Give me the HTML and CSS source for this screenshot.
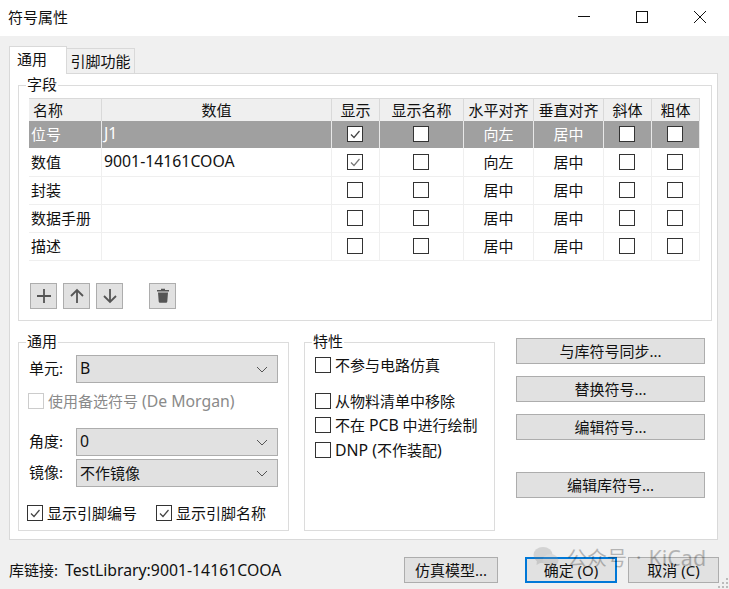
FILE: index.html
```html
<!DOCTYPE html>
<html lang="zh">
<head>
<meta charset="utf-8">
<title>符号属性</title>
<link rel="stylesheet" href="styles.css">
</head>
<body>
<div class="window">
  <header class="titlebar">
    <span class="title">符号属性</span>
    <div class="controls">
      <svg class="ctl" width="12" height="12" viewBox="0 0 12 12"><path d="M0 5.5H12" stroke="#111" fill="none"/></svg>
      <svg class="ctl" width="12" height="12" viewBox="0 0 12 12"><rect x=".5" y=".5" width="11" height="11" stroke="#111" fill="none"/></svg>
      <svg class="ctl" width="12" height="12" viewBox="0 0 12 12"><path d="M0 0L12 12M12 0L0 12" stroke="#111" fill="none"/></svg>
    </div>
  </header>

  <main class="content">
    <div class="tabs">
      <div class="tab active">通用</div>
      <div class="tab">引脚功能</div>
    </div>
    <div class="panel">
      <fieldset class="group fields">
        <legend>字段</legend>
        <div class="grid">
          <div class="c h left">名称</div><div class="c h">数值</div><div class="c h">显示</div><div class="c h">显示名称</div><div class="c h">水平对齐</div><div class="c h">垂直对齐</div><div class="c h">斜体</div><div class="c h">粗体</div>

          <div class="c sel left"><span class="t">位号</span></div><div class="c sel left"><span class="t lat">J1</span></div><div class="c sel"><span class="cb"><svg width="14" height="14" viewBox="0 0 14 14"><path d="M3 7.5L6 10.5L11.5 4" stroke="#444" fill="none" stroke-width="1.2"/></svg></span></div><div class="c sel"><span class="cb"></span></div><div class="c sel"><span class="t">向左</span></div><div class="c sel"><span class="t">居中</span></div><div class="c sel"><span class="cb"></span></div><div class="c sel"><span class="cb"></span></div>

          <div class="c left"><span class="t">数值</span></div><div class="c left"><span class="t lat">9001-14161COOA</span></div><div class="c"><span class="cb"><svg width="14" height="14" viewBox="0 0 14 14"><path d="M3 7.5L6 10.5L11.5 4" stroke="#777" fill="none" stroke-width="1.2"/></svg></span></div><div class="c"><span class="cb"></span></div><div class="c"><span class="t">向左</span></div><div class="c"><span class="t">居中</span></div><div class="c"><span class="cb"></span></div><div class="c"><span class="cb"></span></div>

          <div class="c left"><span class="t">封装</span></div><div class="c left"></div><div class="c"><span class="cb"></span></div><div class="c"><span class="cb"></span></div><div class="c"><span class="t">居中</span></div><div class="c"><span class="t">居中</span></div><div class="c"><span class="cb"></span></div><div class="c"><span class="cb"></span></div>

          <div class="c left"><span class="t">数据手册</span></div><div class="c left"></div><div class="c"><span class="cb"></span></div><div class="c"><span class="cb"></span></div><div class="c"><span class="t">居中</span></div><div class="c"><span class="t">居中</span></div><div class="c"><span class="cb"></span></div><div class="c"><span class="cb"></span></div>

          <div class="c left"><span class="t">描述</span></div><div class="c left"></div><div class="c"><span class="cb"></span></div><div class="c"><span class="cb"></span></div><div class="c"><span class="t">居中</span></div><div class="c"><span class="t">居中</span></div><div class="c"><span class="cb"></span></div><div class="c"><span class="cb"></span></div>
        </div>
        <div class="toolbar">
          <button class="tool"><svg width="18" height="18" viewBox="0 0 18 18"><path d="M9 2V16M2 9H16" stroke="#555" stroke-width="1.8" fill="none"/></svg></button>
          <button class="tool"><svg width="18" height="18" viewBox="0 0 18 18"><path d="M9 16V3M3 9L9 3L15 9" stroke="#555" stroke-width="1.8" fill="none"/></svg></button>
          <button class="tool"><svg width="18" height="18" viewBox="0 0 18 18"><path d="M9 2V15M3 9L9 15L15 9" stroke="#555" stroke-width="1.8" fill="none"/></svg></button>
          <button class="tool trash"><svg width="18" height="18" viewBox="0 0 18 18"><path d="M3 3H7V1.8H11V3H15V4.4H3ZM4 5.4H14L13.3 14.6Q13.2 15.8 12 15.8H6Q4.8 15.8 4.7 14.6Z" fill="#555"/></svg></button>
        </div>
      </fieldset>

      <div class="lower">
        <fieldset class="group general">
          <legend>通用</legend>
          <div class="form-row">
            <span class="lbl">单元:</span>
            <div class="select"><span class="lat">B</span><svg width="12" height="7" viewBox="0 0 12 7"><path d="M1 1L6 6L11 1" stroke="#555" fill="none"/></svg></div>
          </div>
          <label class="check disabled"><span class="cb"></span><span>使用备选符号 <span class="lat">(De Morgan)</span></span></label>
          <div class="form-row angle">
            <span class="lbl">角度:</span>
            <div class="select"><span class="lat">0</span><svg width="12" height="7" viewBox="0 0 12 7"><path d="M1 1L6 6L11 1" stroke="#555" fill="none"/></svg></div>
          </div>
          <div class="form-row mirror">
            <span class="lbl">镜像:</span>
            <div class="select"><span>不作镜像</span><svg width="12" height="7" viewBox="0 0 12 7"><path d="M1 1L6 6L11 1" stroke="#555" fill="none"/></svg></div>
          </div>
          <div class="pins">
            <label class="check"><span class="cb"><svg width="14" height="14" viewBox="0 0 14 14"><path d="M3 7.5L6 10.5L11.5 4" stroke="#444" fill="none" stroke-width="1.2"/></svg></span>显示引脚编号</label>
            <label class="check"><span class="cb"><svg width="14" height="14" viewBox="0 0 14 14"><path d="M3 7.5L6 10.5L11.5 4" stroke="#444" fill="none" stroke-width="1.2"/></svg></span>显示引脚名称</label>
          </div>
        </fieldset>

        <fieldset class="group attrs">
          <legend>特性</legend>
          <label class="check"><span class="cb"></span>不参与电路仿真</label>
          <label class="check gap-a"><span class="cb"></span>从物料清单中移除</label>
          <label class="check gap-b"><span class="cb"></span><span>不在 <span class="lat">PCB</span> 中进行绘制</span></label>
          <label class="check gap-c"><span class="cb"></span><span><span class="lat">DNP (</span>不作装配<span class="lat">)</span></span></label>
        </fieldset>

        <div class="actions">
          <button class="btn">与库符号同步...</button>
          <button class="btn">替换符号...</button>
          <button class="btn">编辑符号...</button>
          <button class="btn last">编辑库符号...</button>
        </div>
      </div>
    </div>
  </main>

  <footer class="footer">
    <span class="link"><span class="link-label">库链接:</span><span class="lat">TestLibrary:9001-14161COOA</span></span>
    <button class="btn sim">仿真模型...</button>
    <button class="btn ok">确定 (O)</button>
    <button class="btn cancel">取消 (C)</button>
  </footer>

  <div class="watermark">
    <svg width="26" height="22" viewBox="0 0 26 22"><ellipse cx="10" cy="8" rx="9.5" ry="8" fill="#7f7f7f"/><path d="M4 13L3.5 18L9 15Z" fill="#7f7f7f"/><ellipse cx="17.5" cy="13.5" rx="8" ry="6.5" fill="#999"/><path d="M21 18L23 21.5L18 19.5Z" fill="#999"/></svg>
    <span class="wm-text">公众号</span>
    <span class="wm-dot">·</span>
    <span class="wm-name">KiCad</span>
  </div>
  <svg class="grip" width="12" height="12" viewBox="0 0 12 12"><path d="M9 1h2v2H9zM5 5h2v2H5zM9 5h2v2H9zM1 9h2v2H1zM5 9h2v2H5zM9 9h2v2H9z" fill="#bbb"/></svg>
</div>
</body>
</html>
```
FILE: styles.css
```css
* { box-sizing: border-box; }
html, body { margin: 0; padding: 0; }
body {
  font-family: "Noto Sans", "Noto Sans CJK SC", sans-serif;
  font-size: 14px;
  color: #111;
}
.lat { font-size: 15.8px; }
.window {
  position: relative;
  width: 729px;
  height: 589px;
  background: #f0f0f0;
  overflow: hidden;
}
.titlebar {
  height: 36px;
  background: #fff;
  display: flex;
  align-items: center;
  justify-content: space-between;
  padding: 0 23px 0 8px;
}
.title { font-size: 15px; line-height: 36px; margin-top: -2px; }
.controls { display: flex; gap: 46px; align-items: center; margin-top: -2px; }
.ctl { display: block; }

.content { padding: 10px 11px 0 9px; }
.tabs { display: flex; align-items: flex-end; height: 28px; }
.tab {
  position: relative;
  height: 25px;
  width: 68px;
  margin-bottom: 1px;
  background: #f0f0f0;
  border: 1px solid #d9d9d9;
  border-left: 0;
  border-bottom: 0;
  font-size: 15px;
  line-height: 24px;
  text-align: center;
}
.tab.active {
  z-index: 1;
  width: 58px;
  height: 28px;
  margin-bottom: 0;
  padding-left: 7px;
  background: #fff;
  border-left: 1px solid #d9d9d9;
  line-height: 25px;
  text-align: left;
}
.panel {
  background: #fff;
  border: 1px solid #d9d9d9;
  height: 467px;
  margin-top: -1px;
  padding: 1px 5px 0 8px;
}

.group {
  margin: 0;
  padding: 0;
  border: 1px solid #dcdcdc;
  min-width: 0;
  background: #fff;
}
.group legend {
  margin-left: -3px;
  padding: 0 1px;
  font-size: 15px;
  line-height: 18px;
  height: 20px;
}
.fields { height: 246px; padding: 3px 10px 0 10px; }

.grid {
  display: grid;
  grid-template-columns: 73px 230px 48px 84px 70px 70px 48px 48px;
  grid-template-rows: 23px 28px 28px 28px 28px 28px;
  width: 671px;
  font-size: 15px;
}
.c {
  display: flex;
  align-items: center;
  justify-content: center;
  padding-bottom: 1px;
  border-right: 1px solid #efefef;
  border-bottom: 1px solid #efefef;
  white-space: nowrap;
  min-width: 0;
}
.t { margin-top: -2px; }
.c.left { justify-content: flex-start; padding-left: 2px; }
.c.h {
  background: #efefef;
  border-top: 1px solid #d9d9d9;
  border-right: 1px solid #d9d9d9;
  border-bottom: 0;
  padding-bottom: 2px;
}
.c.h.left { padding-left: 4px; }
.c.sel {
  background: #a0a0a0;
  color: #fff;
  border-right: 1px solid #e8e8e8;
  border-bottom: 1px solid #fff;
}

.cb {
  flex: none;
  width: 16px;
  height: 16px;
  border: 1px solid #333;
  background: #fff;
  display: inline-flex;
  align-items: center;
  justify-content: center;
}
.c .cb { margin-right: 1px; }
.cb svg { display: block; }

.toolbar { display: flex; gap: 6px; margin-top: 22px; padding-left: 1px; }
.tool {
  width: 27px;
  height: 26px;
  padding: 0;
  background: #e1e1e1;
  border: 1px solid #adadad;
  display: flex;
  align-items: center;
  justify-content: center;
}
.tool.trash { margin-left: 20px; }

.lower { display: flex; align-items: flex-start; margin-top: 11px; }
.general { width: 271px; height: 199px; padding: 3px 10px 0 9px; }
.general legend { margin-left: -2px; }
.attrs { width: 191px; height: 199px; margin-left: 15px; padding: 3px 0 0 10px; }

.form-row { display: flex; align-items: center; height: 28px; }
.form-row.angle { margin-top: 17px; }
.form-row.mirror { margin-top: 3px; }
.lbl { width: 48px; font-size: 15px; flex: none; padding-left: 1px; margin-top: -4px; }
.select {
  flex: 1;
  height: 28px;
  background: #e1e1e1;
  border: 1px solid #adadad;
  display: flex;
  align-items: center;
  justify-content: space-between;
  padding: 0 9px 2px 3px;
  font-size: 15px;
}
.select svg { margin-top: 2px; }

.check {
  display: flex;
  align-items: center;
  gap: 4px;
  font-size: 15px;
  line-height: 20px;
  white-space: nowrap;
}
.check.disabled { color: #8a8a8a; margin-top: 8px; }
.check.disabled .cb { border-color: #ccc; }
.pins { display: flex; gap: 19px; margin-top: 16px; margin-left: -1px; }
.gap-a { margin-top: 16px; }
.gap-b { margin-top: 4px; }
.gap-c { margin-top: 5px; }

.actions { width: 189px; margin-left: 21px; margin-top: 6px; display: flex; flex-direction: column; gap: 12px; }
.btn {
  height: 26px;
  background: #e1e1e1;
  border: 1px solid #adadad;
  font: inherit;
  font-size: 15px;
  color: #111;
  padding: 0 0 2px;
  white-space: nowrap;
}
.btn.last { margin-top: 20px; }

.footer { display: flex; align-items: center; padding: 17px 10px 0 9px; }
.link { font-size: 15px; flex: 1; margin-top: -1px; }
.link-label { margin-right: 7px; }
.sim { width: 94px; }
.ok {
  width: 92px;
  margin-left: 27px;
  border: 2px solid #0078d7;
}
.cancel { width: 91px; margin-left: 11px; }

.watermark {
  position: absolute;
  left: 533px;
  top: 543px;
  display: flex;
  align-items: center;
  color: #000;
  opacity: .25;
  pointer-events: none;
  white-space: nowrap;
}
.wm-text { font-size: 20px; margin-left: 8px; }
.wm-dot { font-size: 20px; margin-left: 9px; }
.wm-name { font-size: 21.5px; margin-left: 7px; }
.grip { position: absolute; right: 0; bottom: 0; }
```
